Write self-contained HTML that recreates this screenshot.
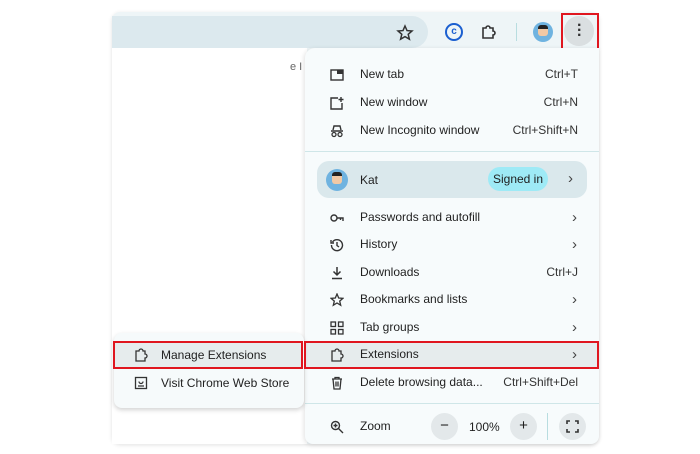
<!DOCTYPE html>
<html><head><meta charset="utf-8"><style>
*{margin:0;padding:0;box-sizing:border-box}
body{width:700px;height:454px;background:#fff;position:relative;overflow:hidden;font-family:"Liberation Sans",sans-serif;color:#1f1f1f;font-size:12px}
.abs{position:absolute}
.win{left:112px;top:12px;width:487px;height:432px;background:#eef5f7;border-radius:8px;box-shadow:0 1px 4px rgba(0,0,0,.12)}
.omni{left:112px;top:16px;width:316px;height:32px;background:#dce9ee;border-radius:0 16px 16px 0}
.content{left:112px;top:48px;width:195px;height:396px;background:#fff}
.menu{left:305px;top:48px;width:294px;height:396px;background:#f7fbfc;border-radius:10px 0 8px 8px;box-shadow:-1px 1px 5px rgba(0,0,0,.12)}
.row{position:absolute;left:305px;width:293px;height:27px;line-height:27px}
.row .t{position:absolute;left:55px}
.row .s{position:absolute;right:20px;color:#333}
.row .ic{position:absolute;left:25px;top:7px;width:14px;height:14px}
.chev{position:absolute;right:21px;font-size:15px;color:#444}
.sep{position:absolute;left:305px;width:294px;height:1px;background:#cfe6e8}
.red{position:absolute;border:2.5px solid #e0161f}
.sub{left:114px;top:333px;width:190px;height:75px;background:#f6fafb;border-radius:8px;box-shadow:0 2px 5px rgba(0,0,0,.18)}
</style></head><body>
<div class="abs win"></div>
<div class="abs omni"></div>
<div class="abs content"></div>
<svg class="abs" style="left:396px;top:24px" width="18" height="18" viewBox="0 0 18 18"><path d="M9 2l2 4.6 5 .4-3.8 3.3 1.2 4.9L9 12.6 4.6 15.2l1.2-4.9L2 7l5-.4z" fill="none" stroke="#333" stroke-width="1.5"/></svg>
<div class="abs" style="left:445px;top:23px;width:18px;height:18px;border:2.5px solid #1b5fd0;border-radius:50%;font-size:10px;font-weight:bold;color:#1b5fd0;text-align:center;line-height:13px">c</div>
<svg class="abs" style="left:480px;top:23px" width="18" height="18" viewBox="0 0 18 18"><path d="M3 5h3a2 2 0 0 1 4 0h3v3a2 2 0 0 1 0 4v3H3z" fill="none" stroke="#333" stroke-width="1.6"/></svg>
<div class="abs" style="left:516px;top:23px;width:1px;height:18px;background:#b8dde0"></div>
<div class="abs" style="left:533px;top:22px;width:20px;height:20px;border-radius:50%;background:#6fb3e0;overflow:hidden"><div style="margin:3px 5px;width:10px;height:11px;background:#f1c9a5;border-top:4px solid #222;border-radius:3px"></div></div>
<div class="abs" style="left:564px;top:16px;width:30px;height:30px;border-radius:50%;background:#dadfe1"></div>
<div class="abs" style="left:577px;top:23px;font-size:16px;line-height:5px;font-weight:bold;color:#333">·<br>·<br>·</div>
<div class="red" style="left:561px;top:13px;width:38px;height:38px"></div>
<div class="abs" style="left:290px;top:61px;font-size:11px;color:#666">e I</div>

<div class="abs menu"></div>
<div class="row" style="top:61px"><svg class="ic" viewBox="0 0 14 14"><rect x="1" y="2" width="12" height="10" fill="none" stroke="#333" stroke-width="1.4"/><rect x="7" y="2" width="6" height="4" fill="#333"/></svg><span class="t">New tab</span><span class="s">Ctrl+T</span></div>
<div class="row" style="top:89px"><svg class="ic" viewBox="0 0 14 14"><path d="M8 2H1v11h11V7M11 1v5M8.5 3.5h5" fill="none" stroke="#333" stroke-width="1.4"/></svg><span class="t">New window</span><span class="s">Ctrl+N</span></div>
<div class="row" style="top:117px"><svg class="ic" viewBox="0 0 14 14"><path d="M3 6l1-4h6l1 4M1 7h12" fill="none" stroke="#333" stroke-width="1.4"/><circle cx="4" cy="10.5" r="2" fill="none" stroke="#333" stroke-width="1.3"/><circle cx="10" cy="10.5" r="2" fill="none" stroke="#333" stroke-width="1.3"/></svg><span class="t">New Incognito window</span><span class="s">Ctrl+Shift+N</span></div>
<div class="sep" style="top:151px"></div>
<div class="abs" style="left:317px;top:161px;width:270px;height:37px;background:#dae8ec;border-radius:12px"></div>
<div class="abs" style="left:326px;top:169px;width:22px;height:22px;border-radius:50%;background:#6fb3e0;overflow:hidden"><div style="margin:3px 6px;width:10px;height:12px;background:#f1c9a5;border-top:4px solid #222;border-radius:3px"></div></div>
<div class="abs" style="left:360px;top:173px">Kat</div>
<div class="abs" style="left:488px;top:167px;width:60px;height:24px;border-radius:12px;background:#9eeaf6;text-align:center;line-height:24px">Signed in</div>
<div class="abs" style="left:568px;top:170px;font-size:15px;color:#444">›</div>
<div class="row" style="top:204px"><svg class="ic" viewBox="0 0 14 14"><circle cx="4" cy="7" r="3" fill="none" stroke="#333" stroke-width="1.4"/><path d="M7 7h6v3M10.5 7v2" fill="none" stroke="#333" stroke-width="1.4"/></svg><span class="t">Passwords and autofill</span><span class="chev">›</span></div>
<div class="row" style="top:231px"><svg class="ic" viewBox="0 0 14 14"><path d="M2.5 4A5.5 5.5 0 1 1 1.5 7M1 2v3h3M7 4v3.5l2 1.5" fill="none" stroke="#333" stroke-width="1.4"/></svg><span class="t">History</span><span class="chev">›</span></div>
<div class="row" style="top:259px"><svg class="ic" viewBox="0 0 14 14"><path d="M7 1v8M3.5 5.5L7 9l3.5-3.5M2 12.5h10" fill="none" stroke="#333" stroke-width="1.5"/></svg><span class="t">Downloads</span><span class="s">Ctrl+J</span></div>
<div class="row" style="top:286px"><svg class="ic" viewBox="0 0 14 14"><path d="M7 1l1.7 4 4.3.3-3.3 2.8 1 4.2L7 10 3.3 12.3l1-4.2L1 5.3 5.3 5z" fill="none" stroke="#333" stroke-width="1.3"/></svg><span class="t">Bookmarks and lists</span><span class="chev">›</span></div>
<div class="row" style="top:314px"><svg class="ic" viewBox="0 0 14 14"><g fill="none" stroke="#333" stroke-width="1.3"><rect x="1" y="1" width="4.5" height="4.5"/><rect x="8.5" y="1" width="4.5" height="4.5"/><rect x="1" y="8.5" width="4.5" height="4.5"/><rect x="8.5" y="8.5" width="4.5" height="4.5"/></g></svg><span class="t">Tab groups</span><span class="chev">›</span></div>
<div class="row" style="top:341px;background:#e6eced"><svg class="ic" viewBox="0 0 14 14"><path d="M2 3h3a2 2 0 0 1 4 0h2v3a2 2 0 0 1 0 4v3H2z" fill="none" stroke="#333" stroke-width="1.3"/></svg><span class="t">Extensions</span><span class="chev">›</span></div>
<div class="row" style="top:369px"><svg class="ic" viewBox="0 0 14 14"><path d="M2 3h10M5 3V1.5h4V3M3 3l1 10h6l1-10M6 5.5v5M8 5.5v5" fill="none" stroke="#333" stroke-width="1.3"/></svg><span class="t">Delete browsing data...</span><span class="s">Ctrl+Shift+Del</span></div>
<div class="sep" style="top:403px"></div>
<div class="row" style="top:413px"><svg class="ic" viewBox="0 0 14 14"><circle cx="5.5" cy="5.5" r="4" fill="none" stroke="#333" stroke-width="1.4"/><path d="M8.5 8.5L13 13M3.5 5.5h4M5.5 3.5v4" stroke="#333" stroke-width="1.4"/></svg><span class="t">Zoom</span></div>
<div class="abs" style="left:431px;top:413px;width:27px;height:27px;border-radius:50%;background:#e3e8ea;text-align:center;line-height:26px;font-size:15px">−</div>
<div class="abs" style="left:469px;top:420px">100%</div>
<div class="abs" style="left:510px;top:413px;width:27px;height:27px;border-radius:50%;background:#e3e8ea;text-align:center;line-height:26px;font-size:15px">+</div>
<div class="abs" style="left:547px;top:413px;width:1px;height:27px;background:#b8dde0"></div>
<div class="abs" style="left:559px;top:413px;width:27px;height:27px;border-radius:50%;background:#e3e8ea"></div>
<svg class="abs" style="left:566px;top:420px" width="13" height="13" viewBox="0 0 13 13"><path d="M1 4V1h3M9 1h3v3M12 9v3H9M4 12H1V9" fill="none" stroke="#333" stroke-width="1.6"/></svg>

<div class="abs sub"></div>
<div class="abs" style="left:114px;top:341px;width:189px;height:27px;background:#e6eced"></div>
<svg class="abs" style="left:134px;top:348px" width="14" height="14" viewBox="0 0 14 14"><path d="M2 3h3a2 2 0 0 1 4 0h2v3a2 2 0 0 1 0 4v3H2z" fill="none" stroke="#333" stroke-width="1.3"/></svg>
<div class="abs" style="left:161px;top:348px">Manage Extensions</div>
<svg class="abs" style="left:134px;top:376px" width="14" height="14" viewBox="0 0 14 14"><rect x="1.5" y="1.5" width="11" height="11" fill="none" stroke="#333" stroke-width="1.3"/><path d="M4 10h6M5 5.5a2 2 0 0 0 4 0" fill="none" stroke="#333" stroke-width="1.3"/></svg>
<div class="abs" style="left:161px;top:376px">Visit Chrome Web Store</div>

<div class="red" style="left:113px;top:341px;width:190px;height:28px"></div>
<div class="red" style="left:304px;top:341px;width:295px;height:28px"></div>
</body></html>
